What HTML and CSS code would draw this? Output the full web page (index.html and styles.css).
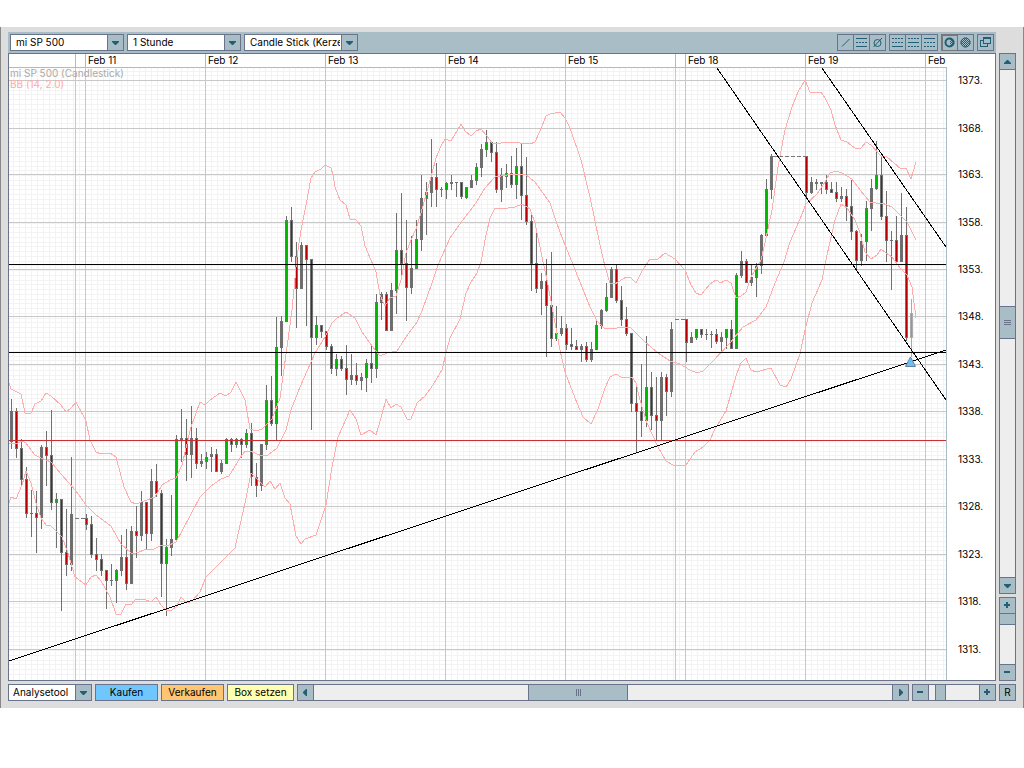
FILE: index.html
```html
<!DOCTYPE html>
<html lang="de">
<head>
<meta charset="utf-8">
<title>mi SP 500</title>
<link rel="stylesheet" href="styles.css">
</head>
<body>
<main class="frame">
  <div class="toolbar">
    <div class="picker">
      <select aria-label="Instrument"><option>mi SP 500</option></select>
      <svg class="arrow" viewBox="0 0 15 15"><path d="M4 6h7v1l-3 3h-1l-3-3z"/></svg>
    </div>
    <div class="picker">
      <select aria-label="Intervall"><option>1 Stunde</option></select>
      <svg class="arrow" viewBox="0 0 15 15"><path d="M4 6h7v1l-3 3h-1l-3-3z"/></svg>
    </div>
    <div class="picker">
      <select aria-label="Darstellung"><option>Candle Stick (Kerzen)</option></select>
      <svg class="arrow" viewBox="0 0 15 15"><path d="M4 6h7v1l-3 3h-1l-3-3z"/></svg>
    </div>
    <div class="tools">
      <div class="group">
        <button aria-label="Linie"><svg viewBox="0 0 15 15"><path class="ln" d="M4 11.5L11.500 4"/></svg></button>
        <button aria-label="Kanal"><svg viewBox="0 0 15 15"><path class="st" d="M2 3.500h11M2 11.500h11"/><path class="st dash" d="M2 7.500h11"/></svg></button>
        <button aria-label="Linien löschen"><svg viewBox="0 0 15 15"><circle class="ln" cx="7.500" cy="8" r="3.500"/><path class="ln" d="M3.500 12L12 3"/></svg></button>
      </div>
      <div class="group">
        <button aria-label="Linie unten"><svg viewBox="0 0 15 15"><path class="st dash" d="M2 3.500h11M2 7.500h11"/><path class="st" d="M2 11.500h11"/></svg></button>
        <button aria-label="Linie mitte"><svg viewBox="0 0 15 15"><path class="st dash" d="M2 3.500h11M2 11.500h11"/><path class="st" d="M2 7.500h11"/></svg></button>
        <button aria-label="Linie oben"><svg viewBox="0 0 15 15"><path class="st dash" d="M2 7.500h11M2 11.500h11"/><path class="st" d="M2 3.500h11"/></svg></button>
      </div>
      <div class="group">
        <button class="on" aria-label="Halb"><svg viewBox="0 0 15 15"><defs><pattern id="dots" width="2" height="2" patternUnits="userSpaceOnUse"><path class="px" d="M0 0h1v1h-1zM1 1h1v1h-1z"/></pattern></defs><circle class="ln thick" cx="7.500" cy="7.500" r="4"/><path fill="url(#dots)" d="M8 3a4 4 0 0 1 0 9z"/></svg></button>
        <button aria-label="Voll"><svg viewBox="0 0 15 15"><circle fill="url(#dots)" cx="7.500" cy="7.500" r="5"/><circle class="ln" cx="7.500" cy="7.500" r="4.500"/></svg></button>
      </div>
      <div class="group">
        <button aria-label="Fenster lösen"><svg viewBox="0 0 15 15"><path class="st" d="M5.500 2.500h7v6h-7zM5 3.500h8M5 5.500h-2.500v6h7v-3"/></svg></button>
      </div>
    </div>
  </div>

  <div class="body">
    <div class="panel"><svg id="chart" class="chart" viewBox="9 54 986 626" role="img" aria-label="mi SP 500 Candlestick"></svg></div>
    <div class="side">
      <div class="scroll vertical">
        <button aria-label="Nach oben"><svg viewBox="0 0 15 15"><path d="M4 10h7v-1l-3-3h-1l-3 3z"/></svg></button>
        <div class="gap" style="flex-grow:237"></div>
        <div class="thumb" style="flex-grow:31"><svg viewBox="0 0 15 15"><path class="grip" d="M4 5.500h7M4 7.500h7M4 9.500h7"/></svg></div>
        <div class="gap" style="flex-grow:239"></div>
        <button aria-label="Nach unten"><svg viewBox="0 0 15 15"><path d="M4 6h7v1l-3 3h-1l-3-3z"/></svg></button>
      </div>
      <div class="zoom vertical">
        <button aria-label="Vertikal vergrößern"><svg viewBox="0 0 15 15"><path d="M6 4h2v2h2v2h-2v2h-2v-2h-2v-2h2z"/></svg></button>
        <input type="range" class="range-v" aria-label="Vertikaler Zoom" min="0" max="100" value="100">
        <button aria-label="Vertikal verkleinern"><svg viewBox="0 0 15 15"><path d="M4 6h6v2h-6z"/></svg></button>
      </div>
    </div>
  </div>

  <div class="footer">
    <div class="picker tool">
      <select aria-label="Analysetool"><option>Analysetool</option></select>
      <svg class="arrow" viewBox="0 0 15 15"><path d="M4 6h7v1l-3 3h-1l-3-3z"/></svg>
    </div>
    <button class="action buy">Kaufen</button>
    <button class="action sell">Verkaufen</button>
    <button class="action box">Box setzen</button>
    <div class="scroll">
      <button aria-label="Nach links"><svg viewBox="0 0 15 15"><path d="M9 4v7h-1l-3-3v-1l3-3z"/></svg></button>
      <div class="gap" style="flex-grow:215"></div>
      <div class="thumb" style="flex-grow:98"><svg viewBox="0 0 15 15"><path class="grip" d="M5.500 4v7M7.500 4v7M9.500 4v7"/></svg></div>
      <div class="gap" style="flex-grow:265"></div>
      <button aria-label="Nach rechts"><svg viewBox="0 0 15 15"><path d="M6 4v7h1l3-3v-1l-3-3z"/></svg></button>
    </div>
    <div class="zoom horizontal">
      <button aria-label="Verkleinern"><svg viewBox="0 0 15 15"><path d="M4 6h6v2h-6z"/></svg></button>
      <input type="range" class="range-h" aria-label="Horizontaler Zoom" min="0" max="100" value="16">
      <button aria-label="Vergrößern"><svg viewBox="0 0 15 15"><path d="M6 4h2v2h2v2h-2v2h-2v-2h-2v-2h2z"/></svg></button>
    </div>
    <button class="reset">R</button>
  </div>
</main>
<script src="chart.js"></script>
</body>
</html>
```

FILE: styles.css
```css
* { box-sizing: border-box; }
body {
  margin: 0;
  padding-top: 27px;
  background: #fff;
  font: 10px/15px Inter, "Liberation Sans", sans-serif;
  color: #000;
}
button, select, input { font: inherit; color: inherit; margin: 0; border-radius: 0; }
button { padding: 0; border: 1px solid #69738a; background: #a8bdc5; cursor: pointer; }
svg { display: block; }
.frame {
  padding: 5px 7px 7px;
  background: #ddd;
  border: 0 solid #888;
  border-width: 0 1px;
}
.toolbar {
  display: flex;
  gap: 3px;
  height: 21px;
  padding: 2px;
  margin-right: 20px;
  background: #a8bdc5;
}
.picker { position: relative; width: 114px; height: 17px; }
.picker select {
  appearance: none;
  display: block;
  width: 100%;
  height: 17px;
  padding: 0 17px 0 5px;
  border: 1px solid #69738a;
  background: #fff;
  outline: none;
}
.arrow {
  position: absolute;
  top: 0;
  right: 0;
  width: 17px;
  height: 17px;
  border: 1px solid #69738a;
  background: #a8bdc5;
  pointer-events: none;
}
.tool { width: 84px; }
.tool select { padding-left: 4px; }
.tools { display: flex; gap: 3px; margin-left: auto; }
.group { display: flex; }
.group button { width: 17px; height: 17px; }
.group button + button { margin-left: -1px; }
.group .on { border-color: #777; box-shadow: inset 1px 1px #777; }
button path, .arrow path { fill: #205f76; }
button .ln, button .st { fill: none; stroke: #205f76; }
button .thick { stroke-width: 2; }
button .st { shape-rendering: crispEdges; }
button .dash { stroke-dasharray: 2 1; }
button [fill] { fill: url(#dots); }
.body { display: flex; gap: 3px; }
.panel { flex: 1; min-width: 0; border: 1px solid #69738a; background: #fff; }
.chart { width: 100%; height: auto; }
.side { width: 17px; display: flex; flex-direction: column; gap: 3px; }
.scroll, .zoom { display: flex; border: 1px solid #69738a; background: #eee; }
.scroll { flex: 1; min-width: 0; }
.vertical { flex-direction: column; }
.gap { flex-basis: 0; }
.thumb {
  display: flex;
  flex-basis: 0;
  align-items: center;
  justify-content: center;
  background: #a8bdc5;
  border: 0 solid #69738a;
  border-width: 0 1px;
}
.vertical .thumb { border-width: 1px 0; }
.thumb svg, .scroll button svg, .zoom button svg { width: 15px; height: 15px; flex: none; }
.grip { stroke: #69738a; fill: none; }
.scroll button, .zoom button { flex: none; width: 16px; border-width: 0 1px 0 0; }
.scroll button:last-child, .zoom button:last-child { border-width: 0 0 0 1px; }
.vertical button { width: 15px; height: 16px; border-width: 0 0 1px; }
.vertical button:last-child { width: 15px; border-width: 1px 0 0; }
.zoom.vertical { height: 84px; }
.zoom.horizontal { width: 84px; }
.zoom input { appearance: none; flex: 1; min-width: 0; min-height: 0; background: #eee; outline: none; }
.range-v { writing-mode: vertical-lr; direction: rtl; width: 15px; }
.range-h::-webkit-slider-thumb {
  appearance: none;
  width: 11px;
  height: 15px;
  background: #a8bdc5;
  border: solid #69738a;
  border-width: 0 1px;
}
.range-v::-webkit-slider-thumb {
  appearance: none;
  width: 15px;
  height: 11px;
  background: #a8bdc5;
  border: solid #69738a;
  border-width: 0 0 1px;
}
.footer { display: flex; gap: 3px; height: 17px; margin-top: 3px; }
.action { width: 64px; }
.buy { background: #70c6ff; }
.sell { background: #ffc570; }
.box { width: 67px; background: #ffffb0; }
.buy, .sell { width: 63px; }
.reset { width: 17px; }

.chart text { font-size: 10px; }
.minor { stroke: #f3f3f3; shape-rendering: crispEdges; }
.major { stroke: #c8c8c8; shape-rendering: crispEdges; }
.edge { stroke: #a8bdc5; shape-rendering: crispEdges; }
.band { fill: none; stroke: #ffacac; shape-rendering: crispEdges; }
.wick { fill: #707070; }
.up { fill: #00b800; }
.down { fill: #b80000; }
.last { fill: #aaa; }
.last-up { fill: #2fe02f; }
.trend { stroke: #000; shape-rendering: crispEdges; }
.limit { stroke: #cc2f2f; shape-rendering: crispEdges; }
.gapline { stroke: #777; stroke-dasharray: 4 2; shape-rendering: crispEdges; }
.marker { fill: #6cc0f8; stroke: #69809a; }
.legend { fill: #aaa; }
.legend-bb { fill: #ffaaaa; }
```

FILE: chart.js
```js
const svg = document.getElementById('chart');
const NS = 'http://www.w3.org/2000/svg';

function add(tag, attrs, text) {
  const el = document.createElementNS(NS, tag);
  for (const k in attrs) el.setAttribute(k, attrs[k]);
  if (text) el.textContent = text;
  svg.appendChild(el);
}
function line(cls, x1, y1, x2, y2) {
  add('line', { class: cls, x1, y1, x2, y2 });
}
function rect(cls, x, y, width, height) {
  add('rect', { class: cls, x, y, width, height });
}

const LEFT = 9, RIGHT = 946, TOP = 68, BOTTOM = 680;
const levels = [80, 128, 174, 222, 269, 316, 364, 411, 459, 506, 554, 601, 649];
const days = [[85, 'Feb 11'], [205, 'Feb 12'], [325, 'Feb 13'], [445, 'Feb 14'], [565, 'Feb 15'], [685, 'Feb 18'], [805, 'Feb 19'], [925, 'Feb']];

for (let x = 13; x < RIGHT; x += 6) line('minor', x + .5, TOP, x + .5, BOTTOM);
for (let i = -2; i < 126; i++) {
  const y = Math.round(80 + i * 4.75) + .5;
  if (y < BOTTOM) line('minor', LEFT, y, RIGHT, y);
}
levels.forEach((y, i) => {
  line('major', LEFT, y + .5, RIGHT, y + .5);
  add('text', { x: 958, y: y + 4 }, (1373 - i * 5) + '.');
});
[75, 675].concat(days.map(d => d[0])).forEach(x => {
  line('major', x + .5, TOP, x + .5, BOTTOM);
  line('edge', x + .5, 54, x + .5, TOP);
});
days.forEach(([x, label]) => add('text', { x: x + 3, y: 64 }, label));

// x of the centre, high, low, body top, body bottom, direction (1 up, 0 down)
const candles = [
[11,399,449,411,442,1],[16,408,458,411,449,0],[21,439,487,448,480,0],[26,467,518,479,514,0],[31,490,537,513,514,0],[36,491,553,513,518,0],[41,445,529,447,518,1],[46,431,486,447,456,0],[51,410,510,455,503,0],[56,493,548,499,503,1],[61,499,611,499,553,0],[66,509,576,552,565,0],[71,457,571,514,565,1],
[86,514,530,518,525,0],[91,516,558,524,555,0],[96,538,571,554,560,0],[101,554,576,559,571,0],[106,570,609,570,581,0],[111,564,586,580,581,0],[116,569,603,570,581,1],[121,535,576,557,571,1],[126,529,590,557,584,0],[131,526,584,531,584,1],[136,506,558,531,536,0],[141,491,541,502,536,1],[146,502,549,502,534,0],[151,469,541,481,534,1],[156,464,497,481,494,0],[161,490,597,493,564,0],[166,539,616,547,564,1],[171,495,556,539,548,1],[176,435,540,439,540,1],[181,409,462,438,440,1],[186,419,481,438,455,0],[191,406,478,438,455,1],[196,428,469,438,464,0],[201,454,467,461,464,1],[206,452,469,457,462,1],[211,447,472,454,457,1],[216,449,472,454,472,0],[221,460,474,463,472,1],[226,438,464,439,464,1],[231,438,452,439,445,0],[236,438,448,439,445,1],[241,438,458,439,445,0],[246,429,448,433,445,1],[251,423,486,433,477,0],[256,463,497,477,486,0],[261,444,491,444,486,1],[266,385,450,400,445,1],[271,376,426,400,424,0],[276,317,440,347,424,1],[281,316,376,321,348,1],[286,216,322,220,322,1],[291,207,262,220,257,0],[296,242,328,256,289,0],[301,242,289,245,289,1],[306,245,326,245,260,0],[311,259,430,259,338,0],[316,316,345,325,338,1],[321,325,338,325,332,0],[326,331,350,331,347,0],[331,344,374,346,369,0],[336,354,376,359,369,1],[341,356,371,359,369,0],[346,345,395,368,380,0],[351,354,385,375,380,1],[356,363,385,375,381,0],[361,373,390,377,381,1],[366,359,392,363,378,1],[371,344,383,363,369,0],[376,294,378,302,369,1],[381,292,320,294,303,1],[386,292,331,294,331,0],[391,283,331,290,331,1],[396,213,314,250,291,1],[401,193,278,250,264,0],[406,220,321,263,288,0],[411,236,294,268,288,1],[416,220,269,239,269,1],[421,175,251,198,240,1],[426,182,235,192,199,1],[431,139,207,177,193,1],[436,163,207,177,190,0],[441,187,197,189,190,0],[446,182,199,183,190,1],[451,175,190,182,184,1],[456,182,197,182,183,0],[461,182,199,182,197,0],[466,187,199,187,198,1],[471,175,188,180,188,1],[476,163,185,167,181,1],[481,144,177,149,168,1],[486,130,157,142,150,1],[491,142,162,142,153,0],[496,142,193,152,190,0],[501,168,202,175,190,1],[506,164,188,173,177,1],[511,156,188,173,185,0],[516,148,199,166,185,1],[521,144,220,166,196,0],[526,157,225,195,222,0],[531,213,291,221,264,0],[536,231,293,263,289,0],[541,273,315,281,289,1],[546,259,357,281,306,0],[551,252,347,305,339,0],[556,306,341,333,339,1],[561,316,336,328,334,1],[566,324,350,328,345,0],[571,328,350,344,347,0],[576,340,350,346,350,0],[581,344,362,346,350,1],[586,342,362,346,360,0],[591,342,362,349,360,1],[596,321,350,325,350,1],[601,309,329,310,326,1],[606,283,312,297,311,1],[611,267,298,269,298,1],[616,265,303,269,301,0],[621,286,326,300,320,0],[626,307,336,319,334,0],[631,333,412,333,404,0],[636,387,453,403,412,0],[641,364,437,411,421,0],[646,336,427,387,421,1],[651,372,430,387,416,0],[656,377,440,415,421,0],[661,372,440,377,421,1],[666,374,416,377,392,0],[671,322,397,329,392,1],[686,319,362,319,343,0],[691,332,343,337,343,1],[696,329,340,329,338,1],[701,329,338,329,335,0],[706,329,340,334,335,0],[711,331,348,334,335,0],[716,329,344,334,342,0],[721,332,352,337,342,1],[726,329,349,329,338,1],[731,320,349,329,349,0],[736,273,349,275,349,1],[741,251,278,261,276,1],[746,259,283,261,283,0],[751,264,286,277,283,1],[756,263,297,266,278,1],[761,234,274,235,266,1],[766,179,237,189,236,1],[771,154,199,156,190,1],[806,156,197,156,193,0],[811,177,194,182,193,1],[816,179,190,182,184,0],[821,182,194,182,184,0],[826,175,194,182,190,0],[831,182,193,189,193,0],[836,182,202,192,199,0],[841,187,202,196,199,1],[846,189,221,196,207,0],[851,180,240,206,232,0],[856,230,270,231,261,0],[861,234,266,241,261,1],[866,201,261,208,242,1],[871,179,231,188,209,1],[876,141,190,175,189,1],[881,157,220,175,217,0],[886,191,262,216,241,0],[891,231,290,240,241,0],[896,216,263,240,262,0],[901,193,262,235,262,1],[906,207,341,235,338,0],[911,299,357,313,338,2]
];
candles.forEach(([x, high, low, top, bottom, dir]) => {
  const frame = dir === 2 ? 'last' : 'wick';
  rect(frame, x, high, 1, low - high);
  rect(frame, x - 1, top, 3, bottom - top);
  if (bottom - top > 2) rect(['down', 'up', 'last-up'][dir], x, top + 1, 1, bottom - top - 2);
});
line('gapline', 75, 518.5, 86, 518.5);
line('gapline', 675, 319.5, 687, 319.5);
line('gapline', 773, 156.5, 806, 156.5);

const bands = [
'9,383 11,389 21,394 25,413 31,413 35,404 41,401 46,393 51,396 61,405 66,412 71,408 76,402 86,421 90,440 96,452 101,454 110,453 116,457 124,487 131,502 136,504 155,497 162,485 170,480 176,478 182,465 191,427 200,402 205,405 210,400 220,393 226,396 231,392 236,382 245,400 250,429 256,431 262,429 272,419 280,398 287,347 292,310 297,257 301,230 307,200 311,178 315,172 321,169 325,165 331,168 333,175 335,187 340,200 346,205 350,219 356,220 361,226 365,246 376,272 380,295 385,306 390,298 396,296 401,280 406,253 411,240 416,229 421,213 426,195 431,177 436,158 441,146 445,139 451,141 461,124 465,131 471,136 476,131 481,129 486,135 493,144 510,142 530,144 535,142 540,131 546,116 550,114 560,112 565,118 570,128 581,160 590,197 599,240 605,267 610,283 615,284 626,277 631,278 636,283 642,271 650,259 657,260 665,253 675,259 685,270 691,285 696,293 701,295 710,284 716,280 721,283 726,280 731,283 736,298 741,296 746,292 751,277 761,260 765,243 772,210 778,167 785,130 792,107 798,92 805,80 810,92 816,93 821,92 825,98 831,110 835,125 841,140 847,142 855,148 861,148 866,142 871,145 881,156 887,157 901,169 906,168 911,179 916,162',
'9,443 16,444 22,441 26,443 35,455 41,458 51,462 61,474 76,491 86,505 96,515 111,526 121,544 131,553 136,553 147,549 152,550 162,545 167,546 176,542 182,531 200,497 211,486 221,479 229,476 240,458 245,451 250,451 262,456 268,455 277,448 286,430 291,410 300,387 315,353 325,337 332,323 337,318 346,312 355,318 362,332 372,346 380,356 387,353 397,351 406,337 417,322 422,311 432,283 438,265 450,238 462,221 476,203 485,188 495,177 513,174 525,174 535,182 550,203 556,221 563,240 580,282 590,307 597,321 605,329 630,327 645,342 658,353 670,361 680,364 690,370 697,373 703,371 712,362 730,343 743,327 756,320 766,307 775,283 784,262 790,242 800,219 806,204 817,194 825,182 830,173 836,171 842,173 852,179 860,190 870,202 876,203 882,203 892,207 907,222 916,240',
'9,503 11,497 16,499 22,485 26,471 31,483 36,503 41,518 46,525 51,526 62,537 68,553 75,577 86,585 91,577 96,575 101,581 110,597 116,614 121,614 126,604 131,605 135,600 144,599 151,602 156,597 161,605 166,610 172,610 176,607 181,597 187,603 192,601 200,592 206,577 215,568 235,548 245,503 251,473 257,479 265,487 270,481 275,489 280,483 285,498 290,504 296,536 301,544 305,539 316,535 326,505 332,467 338,437 350,410 356,419 361,435 370,430 376,435 381,418 386,399 391,408 396,404 401,407 407,419 411,419 417,403 425,396 431,388 442,370 446,353 450,338 460,319 466,293 471,282 477,273 481,262 486,235 490,218 495,208 502,209 515,207 522,204 530,209 535,223 542,257 547,280 553,312 560,350 565,372 570,385 577,403 583,417 591,424 598,409 605,388 610,377 616,374 621,377 632,377 636,383 640,400 647,423 658,447 666,461 673,465 686,465 695,452 703,447 710,440 715,429 726,411 732,390 737,373 741,363 746,358 751,370 756,372 771,368 780,385 786,387 791,379 800,354 805,330 812,303 822,280 827,255 835,220 841,204 847,208 855,220 860,233 865,252 871,259 877,255 881,249 886,253 892,257 900,268 907,275 912,287 916,318'
];
bands.forEach(points => add('polyline', { class: 'band', points }));

line('trend', LEFT, 264.5, RIGHT, 264.5);
line('trend', LEFT, 352.5, RIGHT, 352.5);
line('limit', LEFT, 440.5, RIGHT, 440.5);
line('trend', LEFT, 661, RIGHT, 350);
line('trend', 717, TOP, RIGHT, 400);
line('trend', 822, TOP, RIGHT, 247);
add('polygon', { class: 'marker', points: '910.5,357 915.5,366.5 905.5,366.5' });

line('edge', LEFT, 67.5, RIGHT + 1, 67.5);
line('edge', RIGHT + .5, 67, RIGHT + .5, BOTTOM);
add('text', { class: 'legend', x: 10, y: 77 }, 'mi SP 500 (Candlestick)');
add('text', { class: 'legend-bb', x: 10, y: 88 }, 'BB (14, 2.0)');
```
